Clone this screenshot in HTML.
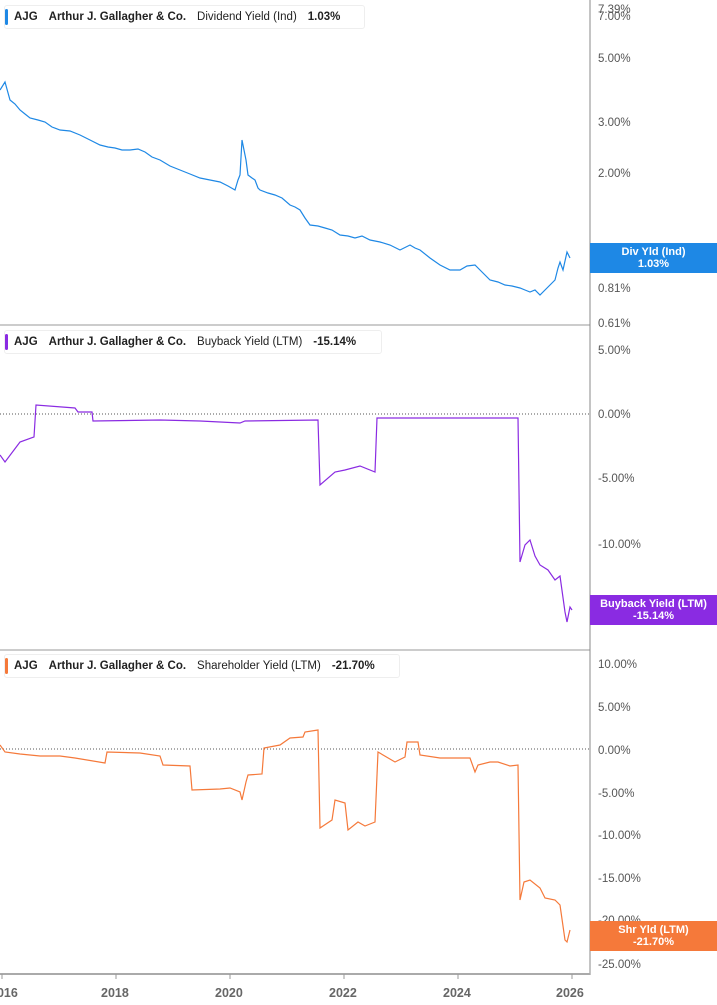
<!DOCTYPE html>
<html><head><meta charset="utf-8"><style>
body{margin:0;width:717px;height:1005px;background:#fff;overflow:hidden;font-family:"Liberation Sans",sans-serif}
svg{display:block}
.l{font-size:11.5px;fill:#555}
.x{font-size:12.5px;fill:#666;font-weight:bold}
.lg{position:absolute;height:24px;background:#fff;border:1px solid #eee;border-radius:3px;font-size:11.5px;font-weight:bold;color:#222;display:flex;align-items:center;padding:0 8px 0 9px;box-sizing:border-box;white-space:nowrap;overflow:hidden}
.lg b{position:absolute;left:0;top:3px;bottom:3px;width:3px;border-radius:2px}
.lg span{margin-right:11px;flex-shrink:0}.lg .n{font-weight:normal}
.tag{position:absolute;left:590px;width:127px;height:30px;color:#fff;font-size:11px;font-weight:bold;text-align:center;line-height:12px;padding-top:3px;box-sizing:border-box}
</style></head><body>
<svg width="717" height="1005" style="position:absolute;left:0;top:0">
<g stroke="#999" stroke-width="1"><line x1="0" y1="325" x2="590" y2="325"/><line x1="0" y1="650" x2="590" y2="650"/><line x1="590" y1="0" x2="590" y2="975" stroke="#888"/><line x1="0" y1="974" x2="590" y2="974" stroke-width="2" stroke="#aaa"/>
<line x1="2" y1="974" x2="2" y2="979"/><line x1="116" y1="974" x2="116" y2="979"/><line x1="230" y1="974" x2="230" y2="979"/><line x1="344" y1="974" x2="344" y2="979"/><line x1="458" y1="974" x2="458" y2="979"/><line x1="572" y1="974" x2="572" y2="979"/></g>
<g stroke="#555" stroke-dasharray="1,2"><line x1="0" y1="414" x2="590" y2="414"/><line x1="0" y1="749" x2="590" y2="749"/></g>
<polyline fill="none" stroke="#1e88e5" stroke-width="1.2" points="0,90 5,82 10,100 15,104 20,110 25,114 30,118 38,120 45,122 52,127 60,130 70,131 80,135 90,140 100,145 108,147 115,148 122,150 130,150 138,149 145,152 152,157 160,160 170,166 180,170 190,174 200,178 210,180 220,182 228,186 235,190 238,180 240,175 242,140 244,150 246,160 248,175 252,178 255,180 258,188 260,190 268,193 275,195 282,198 290,205 295,207 300,210 305,218 310,225 318,226 325,228 332,230 340,235 348,236 355,238 362,236 370,240 380,242 390,245 400,250 410,245 415,248 420,250 430,258 440,265 450,270 460,270 467,266 475,265 482,272 490,280 498,282 505,285 512,286 520,288 525,290 530,292 535,290 540,295 545,290 550,285 555,280 558,268 560,262 563,270 567,252 570,258"/>
<polyline fill="none" stroke="#8a2be2" stroke-width="1.2" points="0,455 5,462 20,442 34,437 36,405 75,408 78,412 92,412 93,421 160,420 200,421 240,423 245,421 318,420 320,485 335,472 345,470 360,466 375,472 377,418 518,418 520,562 525,545 530,540 535,556 540,565 548,570 555,580 560,576 565,612 567,622 570,607 572,610"/>
<polyline fill="none" stroke="#f5793a" stroke-width="1.2" points="0,745 5,752 20,754 40,756 60,756 75,758 105,763 107,752 140,753 160,756 163,765 190,766 192,790 220,789 230,788 240,792 242,800 246,782 248,775 262,774 264,748 280,745 290,738 303,737 305,732 318,730 320,828 332,820 335,800 345,803 348,830 358,822 365,826 375,822 378,752 395,762 405,757 407,742 418,742 420,755 440,758 470,758 475,772 478,765 490,762 498,762 510,766 518,765 520,900 524,882 530,880 540,888 545,898 555,900 560,905 565,940 567,942 570,930"/>
<g class="l">
<text x="598" y="13">7.39%</text><text x="598" y="20">7.00%</text><text x="598" y="62">5.00%</text><text x="598" y="126">3.00%</text><text x="598" y="177">2.00%</text><text x="598" y="266">1.00%</text><text x="598" y="292">0.81%</text><text x="598" y="327">0.61%</text>
<text x="598" y="354">5.00%</text><text x="598" y="418">0.00%</text><text x="598" y="482">-5.00%</text><text x="598" y="548">-10.00%</text><text x="598" y="612">-15.00%</text>
<text x="598" y="668">10.00%</text><text x="598" y="711">5.00%</text><text x="598" y="754">0.00%</text><text x="598" y="797">-5.00%</text><text x="598" y="839">-10.00%</text><text x="598" y="882">-15.00%</text><text x="598" y="924">-20.00%</text><text x="598" y="968">-25.00%</text>
</g>
<g class="x"><text x="-10" y="997">2016</text><text x="101" y="997">2018</text><text x="215" y="997">2020</text><text x="329" y="997">2022</text><text x="443" y="997">2024</text><text x="556" y="997">2026</text></g>
</svg>
<div class="lg" style="left:4px;top:5px;width:361px"><b style="background:#1e88e5"></b><span>AJG</span><span>Arthur J. Gallagher &amp; Co.</span><span class="n">Dividend Yield (Ind)</span><span>1.03%</span></div>
<div class="lg" style="left:4px;top:330px;width:378px"><b style="background:#8a2be2"></b><span>AJG</span><span>Arthur J. Gallagher &amp; Co.</span><span class="n">Buyback Yield (LTM)</span><span>-15.14%</span></div>
<div class="lg" style="left:4px;top:654px;width:396px"><b style="background:#f5793a"></b><span>AJG</span><span>Arthur J. Gallagher &amp; Co.</span><span class="n">Shareholder Yield (LTM)</span><span>-21.70%</span></div>
<div class="tag" style="top:243px;background:#1e88e5">Div Yld (Ind)<br>1.03%</div>
<div class="tag" style="top:595px;background:#8a2be2">Buyback Yield (LTM)<br>-15.14%</div>
<div class="tag" style="top:921px;background:#f5793a">Shr Yld (LTM)<br>-21.70%</div>
</body></html>
